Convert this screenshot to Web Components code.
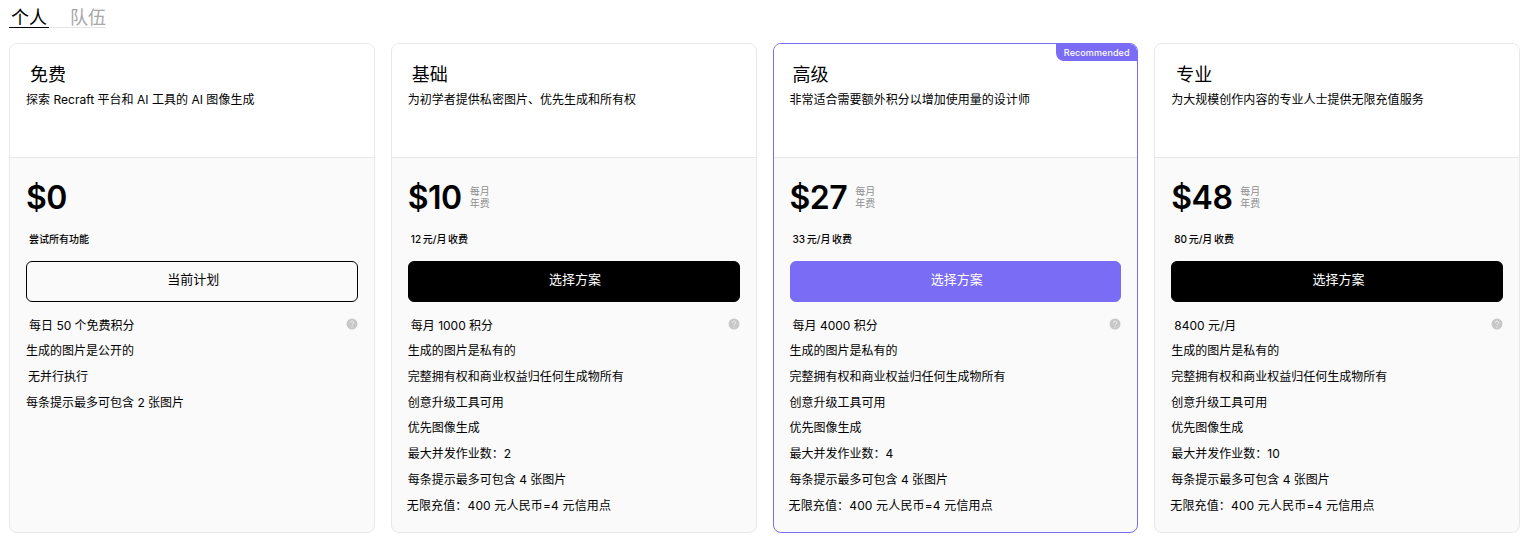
<!DOCTYPE html>
<html lang="zh">
<head>
<meta charset="utf-8">
<title>Plans</title>
<style>
  html, body { margin: 0; background: #fff; }
  body {
    padding: 0 11px 0 9px;
    font-family: Inter, "Noto Sans CJK SC", sans-serif;
    color: #000;
  }
</style>
</head>
<body>
<plan-tabs></plan-tabs>
<plan-grid>
  <plan-card name="免费" desc="探索 Recraft 平台和 AI 工具的 AI 图像生成" price="$0" note="尝试所有功能" action="当前计划" kind="current" title-indent="4" note-indent="3">
    <plan-row help indent="3">每日 50 个免费积分</plan-row>
    <plan-row>生成的图片是公开的</plan-row>
    <plan-row indent="2">无并行执行</plan-row>
    <plan-row>每条提示最多可包含 2 张图片</plan-row>
  </plan-card>
  <plan-card name="基础" desc="为初学者提供私密图片、优先生成和所有权" price="$10" note="12 元/月 收费" action="选择方案" kind="dark" title-indent="4" note-indent="3" period>
    <plan-row help indent="3">每月 1000 积分</plan-row>
    <plan-row>生成的图片是私有的</plan-row>
    <plan-row>完整拥有权和商业权益归任何生成物所有</plan-row>
    <plan-row>创意升级工具可用</plan-row>
    <plan-row>优先图像生成</plan-row>
    <plan-row>最大并发作业数：2</plan-row>
    <plan-row>每条提示最多可包含 4 张图片</plan-row>
    <plan-row indent="-1" style="letter-spacing:.15px">无限充值：400 元人民币=4 元信用点</plan-row>
  </plan-card>
  <plan-card name="高级" desc="非常适合需要额外积分以增加使用量的设计师" price="$27" note="33 元/月 收费" action="选择方案" kind="accent" title-indent="3" note-indent="3" period recommended>
    <plan-row help indent="3">每月 4000 积分</plan-row>
    <plan-row>生成的图片是私有的</plan-row>
    <plan-row>完整拥有权和商业权益归任何生成物所有</plan-row>
    <plan-row>创意升级工具可用</plan-row>
    <plan-row>优先图像生成</plan-row>
    <plan-row>最大并发作业数：4</plan-row>
    <plan-row>每条提示最多可包含 4 张图片</plan-row>
    <plan-row indent="-1" style="letter-spacing:.15px">无限充值：400 元人民币=4 元信用点</plan-row>
  </plan-card>
  <plan-card name="专业" desc="为大规模创作内容的专业人士提供无限充值服务" price="$48" note="80 元/月 收费" action="选择方案" kind="dark" title-indent="5" note-indent="3" period>
    <plan-row help indent="3">8400 元/月</plan-row>
    <plan-row>生成的图片是私有的</plan-row>
    <plan-row>完整拥有权和商业权益归任何生成物所有</plan-row>
    <plan-row>创意升级工具可用</plan-row>
    <plan-row>优先图像生成</plan-row>
    <plan-row>最大并发作业数：10</plan-row>
    <plan-row>每条提示最多可包含 4 张图片</plan-row>
    <plan-row indent="-1" style="letter-spacing:.15px">无限充值：400 元人民币=4 元信用点</plan-row>
  </plan-card>
</plan-grid>

<script>
class PlanTabs extends HTMLElement {
  constructor() {
    super();
    this.attachShadow({ mode: 'open' });
    this.shadowRoot.innerHTML = `
      <style>
        :host { display: flex; height: 28px; width: 97px; border-bottom: 1px solid #e5e5e5; box-sizing: border-box; gap: 21px; margin-bottom: 15px; }
        span { font-size: 18px; line-height: 36px; height: 28px; box-sizing: border-box; color: #a8a8a8; white-space: nowrap; flex: none; }
        .on { color: #000; border-bottom: 1px solid #000; padding: 0 2px; width: 40px; }
      </style>
      <span class="on">个人</span>
      <span>队伍</span>
    `;
  }
}

class PlanGrid extends HTMLElement {
  constructor() {
    super();
    this.attachShadow({ mode: 'open' });
    this.shadowRoot.innerHTML = `
      <style>
        :host { display: grid; grid-template-columns: repeat(4, 1fr); gap: 16px; height: 490px; }
      </style>
      <slot></slot>
    `;
  }
}

class PlanCard extends HTMLElement {
  constructor() {
    super();
    this.attachShadow({ mode: 'open' });
  }

  connectedCallback() {
    const a = (n) => this.getAttribute(n) || '';
    const badge = this.hasAttribute('recommended') ? '<div class="badge">Recommended</div>' : '';
    const period = this.hasAttribute('period')
      ? '<div class="period"><span>每月</span><span>年费</span></div>' : '';
    this.shadowRoot.innerHTML = `
      <style>
        :host {
          display: flex; flex-direction: column; position: relative;
          box-sizing: border-box; overflow: hidden;
          border: 1px solid #e8e8e8; border-radius: 8px; background: #fafafa;
        }
        :host([recommended]) { border-color: #7a6cf5; }
        .head {
          height: 114px; box-sizing: border-box; flex: none;
          background: #fff; border-bottom: 1px solid #e8e8e8;
          padding: 19px 16px 0;
        }
        h2 { margin: 0; font-size: 18px; font-weight: 400; line-height: 24px; padding-left: ${a('title-indent')}px; }
        p { margin: 4px 0 0; font-size: 12px; line-height: 18px; letter-spacing: .02px; }
        .body { padding: 20px 16px 0; display: flex; flex-direction: column; }
        .price { display: flex; align-items: center; gap: 8px; height: 40px; }
        .amount { font-size: 32px; font-weight: 600; line-height: 40px; letter-spacing: -0.5px; }
        .period { display: flex; flex-direction: column; font-size: 10px; line-height: 12px; color: #8f8f8f; margin-top: -3px; }
        .note { margin-top: 14px; font-size: 10px; line-height: 14px; font-weight: 500; word-spacing: -1px; padding-left: ${a('note-indent')}px; }
        button {
          margin-top: 15px; height: 41px; width: 100%; box-sizing: border-box;
          border-radius: 6px; border: 1px solid #000; font: inherit; font-size: 13px; cursor: pointer;
          padding: 0 0 6px 3px;
        }
        .current { background: transparent; color: #000; }
        .dark { background: #000; color: #fff; }
        .accent { background: #7a6cf5; border-color: #7a6cf5; color: #fff; }
        .rows { margin-top: 9.4px; display: flex; flex-direction: column; }
        .badge {
          position: absolute; top: 0; right: 0; width: 81px; height: 17px;
          background: #7a6cf5; color: #fff; font-size: 9px; line-height: 17px; text-align: center;
          font-weight: 500; letter-spacing: 0.1px; border-bottom-left-radius: 8px;
        }
      </style>
      ${badge}
      <div class="head">
        <h2>${a('name')}</h2>
        <p>${a('desc')}</p>
      </div>
      <div class="body">
        <div class="price"><span class="amount">${a('price')}</span>${period}</div>
        <div class="note">${a('note')}</div>
        <button class="${a('kind')}">${a('action')}</button>
        <div class="rows"><slot></slot></div>
      </div>
    `;
  }
}

class PlanRow extends HTMLElement {
  constructor() {
    super();
    this.attachShadow({ mode: 'open' });
  }

  connectedCallback() {
    const icon = this.hasAttribute('help') ? `
      <svg width="12" height="12" viewBox="0 0 12 12" aria-hidden="true">
        <circle cx="6" cy="6" r="5.5" fill="#c8c8c8"/>
        <path d="M4.4 4.7a1.6 1.6 0 1 1 2.4 1.4c-.5.3-.8.6-.8 1.1" fill="none" stroke="#f2f2f2" stroke-width="1"/>
        <circle cx="6" cy="8.9" r=".6" fill="#f2f2f2"/>
      </svg>` : '';
    this.shadowRoot.innerHTML = `
      <style>
        :host {
          display: flex; align-items: center; justify-content: space-between;
          height: 25.7px; font-size: 12px;
          margin-left: ${this.getAttribute('indent') || 0}px;
        }
        svg { flex: none; }
      </style>
      <span><slot></slot></span>${icon}
    `;
  }
}

customElements.define('plan-tabs', PlanTabs);
customElements.define('plan-grid', PlanGrid);
customElements.define('plan-card', PlanCard);
customElements.define('plan-row', PlanRow);
</script>
</body>
</html>
